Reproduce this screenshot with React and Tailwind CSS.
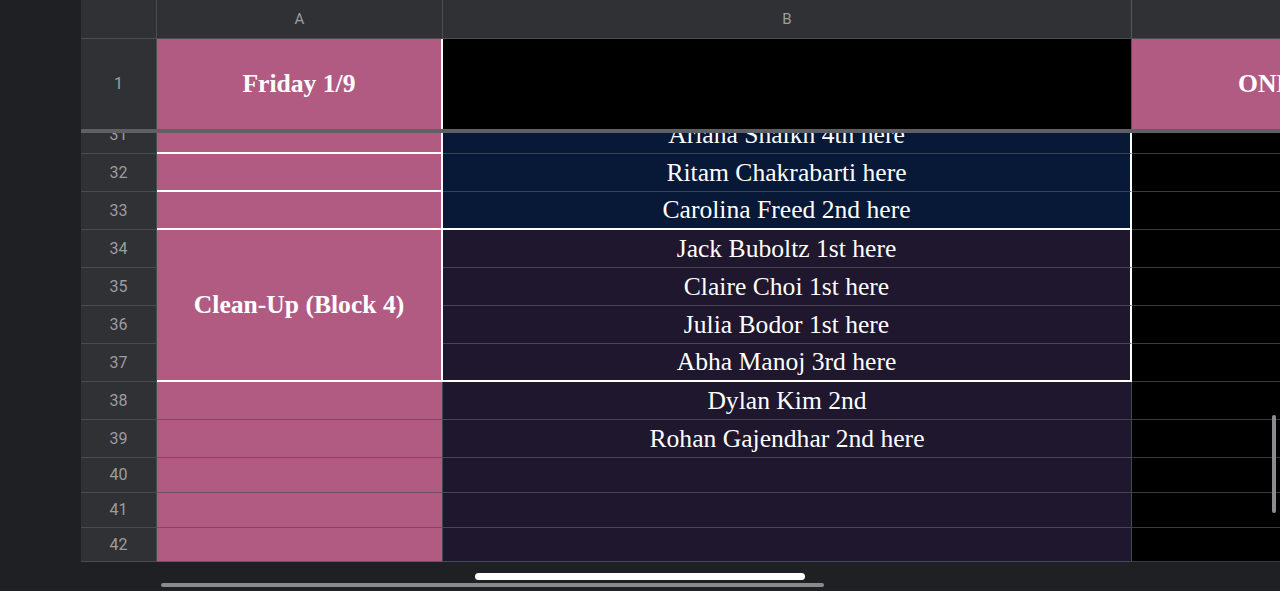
import React from "react";

const serif = { fontFamily: '"Liberation Serif", "Times New Roman", serif' };
const sans = { fontFamily: 'Roboto, "Liberation Sans", Arial, sans-serif' };

const bodyRows = [31, 32, 33, 34, 35, 36, 37, 38, 39, 40, 41, 42];

const names = {
  31: "Ariana Shaikh 4th here",
  32: "Ritam Chakrabarti here",
  33: "Carolina Freed 2nd here",
  34: "Jack Buboltz 1st here",
  35: "Claire Choi 1st here",
  36: "Julia Bodor 1st here",
  37: "Abha Manoj 3rd here",
  38: "Dylan Kim 2nd",
  39: "Rohan Gajendhar 2nd here",
};

function rowHeight(n) {
  if (n === 42) return "h-[34px]";
  return n >= 40 ? "h-[35px]" : "h-[38px]";
}

function bCellClass(n) {
  const bg = n <= 33 ? "bg-[#071936]" : "bg-[#1e172e]";
  let bottom = "border-b border-b-[#4a4552]";
  if (n <= 32) bottom = "border-b border-b-[#3a4150]";
  if (n === 33 || n === 37) bottom = "border-b-2 border-b-white";
  const right = n <= 37 ? "border-r-2 border-r-white" : "border-r border-r-[#47464e]";
  return `${bg} ${bottom} ${right}`;
}

export default function App() {
  return (
    <div className="relative flex h-[591px] w-[1280px] overflow-hidden bg-[#1f2023]">
      {/* left gutter */}
      <div className="w-[81px] shrink-0 bg-[#1f2023]" />

      <div className="flex flex-1 flex-col">
        {/* column headers */}
        <div className="flex h-[39px] border-b border-[#4c4d51] bg-[#303135] text-[15px] text-[#9c9da1]" style={sans}>
          <div className="w-[76px] shrink-0 border-r border-[#4c4d51]" />
          <div className="flex w-[286px] shrink-0 items-center justify-center border-r border-[#4c4d51]">A</div>
          <div className="flex w-[689px] shrink-0 items-center justify-center border-r border-[#55565a]">B</div>
          <div className="flex-1" />
        </div>

        {/* frozen row 1 */}
        <div className="flex h-[90px]">
          <div className="flex w-[76px] shrink-0 items-center justify-center border-r border-[#4c4d51] bg-[#303135] text-[16px] text-[#9c9da1]" style={sans}>
            1
          </div>
          <div className="flex w-[286px] shrink-0 items-center justify-center border-r-2 border-white bg-[#b15b83] text-[25.6px] font-bold text-white" style={serif}>
            Friday 1/9
          </div>
          <div className="w-[689px] shrink-0 border-r border-[#55565a] bg-black" />
          <div className="flex flex-1 items-center overflow-hidden whitespace-nowrap bg-[#b15b83] pl-[106px] text-[25.6px] font-bold text-white" style={serif}>
            ONLINE
          </div>
        </div>

        {/* freeze divider */}
        <div className="h-[4px] bg-[#5e6064]" />

        {/* scrolled body */}
        <div className="h-[429px] overflow-hidden">
          <div className="-mt-[17px] flex">
            {/* row numbers */}
            <div className="flex w-[76px] shrink-0 flex-col bg-[#303135] text-[16px] text-[#9c9da1]" style={sans}>
              {bodyRows.map((n) => (
                <div
                  key={n}
                  className={`${rowHeight(n)} flex items-center justify-center border-b border-r border-[#4a4b4f]`}
                >
                  {n}
                </div>
              ))}
            </div>

            {/* column A */}
            <div className="flex w-[286px] shrink-0 flex-col bg-[#b15b83]">
              {[31, 32, 33].map((n) => (
                <div key={n} className="h-[38px] border-b-2 border-r-2 border-white" />
              ))}
              <div className="flex h-[152px] items-center justify-center border-b-2 border-r-2 border-white text-[25.6px] font-bold text-white" style={serif}>
                Clean-Up (Block 4)
              </div>
              {[38, 39, 40, 41, 42].map((n) => (
                <div key={n} className={`${rowHeight(n)} border-b border-r border-b-[#6e5164] border-r-[#47464e]`} />
              ))}
            </div>

            {/* column B */}
            <div className="flex w-[689px] shrink-0 flex-col text-[25.6px] text-white" style={serif}>
              {bodyRows.map((n) => (
                <div
                  key={n}
                  className={`${rowHeight(n)} ${bCellClass(n)} flex items-center justify-center whitespace-nowrap leading-none`}
                >
                  {names[n] || ""}
                </div>
              ))}
            </div>

            {/* column C */}
            <div className="flex flex-1 flex-col bg-black">
              {bodyRows.map((n) => (
                <div key={n} className={`${rowHeight(n)} border-b border-[#3a3a3c]`} />
              ))}
            </div>
          </div>
        </div>
      </div>

      {/* vertical scroll indicator */}
      <div className="absolute left-[1272px] top-[415px] h-[98px] w-[4px] rounded-full bg-[#8c8c90]" />
      {/* horizontal scroll indicator */}
      <div className="absolute left-[161px] top-[583px] h-[4px] w-[663px] rounded-full bg-[#8a8a8c]" />
      {/* home indicator */}
      <div className="absolute left-[475px] top-[573px] h-[7px] w-[330px] rounded-full bg-white" />
    </div>
  );
}
